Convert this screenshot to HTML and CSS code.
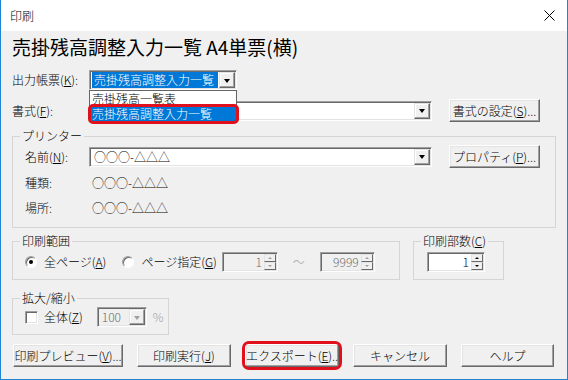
FILE: index.html
```html
<!DOCTYPE html>
<html lang="ja">
<head>
<meta charset="utf-8">
<title>印刷</title>
<link rel="stylesheet" href="styles.css">
</head>
<body>
<div class="window">
  <div class="titlebar">
    <span class="title">印刷</span>
    <span class="close"><svg width="11" height="11" viewBox="0 0 11 11"><path d="M0.5 0.5L10.5 10.5M10.5 0.5L0.5 10.5" stroke="#000" stroke-width="1" fill="none"/></svg></span>
  </div>
  <div class="content">
    <h1 class="heading">売掛残高調整入力一覧 A4単票(横)</h1>

    <div class="row row-report">
      <span class="label">出力帳票(<u>K</u>):</span>
      <div class="combo combo-report">
        <span class="combo-text selected">売掛残高調整入力一覧</span>
        <span class="drop-btn"><i class="tri"></i></span>
        <ul class="dropdown">
          <li class="item">売掛残高一覧表</li>
          <li class="item item-active">売掛残高調整入力一覧</li>
        </ul>
      </div>
    </div>

    <div class="row row-format">
      <span class="label">書式(<u>F</u>):</span>
      <div class="combo combo-wide">
        <span class="combo-text"></span>
        <span class="drop-btn"><i class="tri"></i></span>
      </div>
      <button class="btn btn-side">書式の設定(<u>S</u>)...</button>
    </div>

    <fieldset class="group group-printer">
      <legend>プリンター</legend>
      <div class="group-inner printer-inner">
        <div class="prow prow-name">
          <span class="plabel">名前(<u>N</u>):</span>
          <div class="combo combo-wide">
            <span class="combo-text">○○○-△△△</span>
            <span class="drop-btn"><i class="tri"></i></span>
          </div>
          <button class="btn btn-side">プロパティ(<u>P</u>)...</button>
        </div>
        <div class="prow prow-info">
          <span class="plabel">種類:</span>
          <span class="pvalue">○○○-△△△</span>
        </div>
        <div class="prow prow-info">
          <span class="plabel">場所:</span>
          <span class="pvalue">○○○-△△△</span>
        </div>
      </div>
    </fieldset>

    <div class="row row-range">
      <fieldset class="group group-range">
        <legend>印刷範囲</legend>
        <div class="group-inner range-inner">
          <span class="radio checked"></span>
          <span class="opt-text">全ページ(<u>A</u>)</span>
          <span class="radio radio-2"></span>
          <span class="opt-text">ページ指定(<u>G</u>)</span>
          <div class="spin spin-disabled spin-from">
            <span class="spin-val">1</span>
            <span class="spin-btns"><span class="sb"><i class="tri-up"></i></span><span class="sb"><i class="tri-down"></i></span></span>
          </div>
          <span class="tilde">～</span>
          <div class="spin spin-disabled spin-to">
            <span class="spin-val">9999</span>
            <span class="spin-btns"><span class="sb"><i class="tri-up"></i></span><span class="sb"><i class="tri-down"></i></span></span>
          </div>
        </div>
      </fieldset>
      <fieldset class="group group-copies">
        <legend>印刷部数(<u>C</u>)</legend>
        <div class="group-inner copies-inner">
          <div class="spin spin-copies">
            <span class="spin-val">1</span>
            <span class="spin-btns"><span class="sb"><i class="tri-up dark"></i></span><span class="sb"><i class="tri-down dark"></i></span></span>
          </div>
        </div>
      </fieldset>
    </div>

    <fieldset class="group group-zoom">
      <legend>拡大/縮小</legend>
      <div class="group-inner zoom-inner">
        <span class="checkbox"></span>
        <span class="opt-text">全体(<u>Z</u>)</span>
        <div class="combo combo-small disabled">
          <span class="combo-text">100</span>
          <span class="drop-btn"><i class="tri gray"></i></span>
        </div>
        <span class="percent">%</span>
      </div>
    </fieldset>

    <div class="buttons">
      <button class="btn btn-preview">印刷プレビュー(<u>V</u>)...</button>
      <button class="btn btn-std">印刷実行(<u>J</u>)</button>
      <button class="btn btn-std btn-export">エクスポート(<u>E</u>)...</button>
      <button class="btn btn-std">キャンセル</button>
      <button class="btn btn-std btn-help">ヘルプ</button>
    </div>
  </div>
</div>
</body>
</html>
```
FILE: styles.css
```css
* { box-sizing: border-box; margin: 0; padding: 0; }
html, body { margin: 0; background: #f0f0f0; }
body {
  font-family: "Noto Sans CJK JP", "Noto Sans", sans-serif;
  font-size: 12px;
  font-weight: 300;
  color: #000;
}
u { text-decoration: underline; text-underline-offset: 1px; }

.window {
  width: 568px;
  height: 380px;
  border: 1px solid #1f84d4;
  border-top: none;
  background: #f0f0f0;
  display: flex;
  flex-direction: column;
}

.titlebar {
  height: 31px;
  background: #fff;
  display: flex;
  align-items: center;
  justify-content: space-between;
  padding: 0 12px 0 9px;
}
.title { font-size: 12px; line-height: 16px; }
.close { display: flex; width: 11px; height: 11px; }

.content {
  flex: 1;
  padding: 4px 11px 0 11px;
  display: flex;
  flex-direction: column;
}

.heading {
  font-size: 19px;
  font-weight: 400;
  line-height: 24px;
  height: 24px;
  white-space: nowrap;
}

.row { display: flex; align-items: center; }
.row-report { margin-top: 11px; height: 20px; position: relative; z-index: 2; }
.row-format { margin-top: 9px; height: 23px; }
.label { width: 77px; line-height: 16px; white-space: nowrap; }

/* combo boxes */
.combo {
  position: relative;
  height: 20px;
  display: flex;
  padding: 1px;
  background: #fff;
  border: 1px solid;
  border-color: #a0a0a0 #fff #fff #a0a0a0;
  box-shadow: inset 1px 1px 0 #696969, inset -1px -1px 0 #e3e3e3;
}
.combo-report { width: 148px; }
.combo-wide { width: 343px; }
.combo-small { width: 50px; }
.combo-text {
  flex: 1;
  line-height: 16px;
  padding-left: 2px;
  margin-left: 1px;
  white-space: nowrap;
  overflow: hidden;
}
.combo-text.selected { background: #0078d7; color: #fff; margin-right: 1px; }
.drop-btn {
  width: 16px;
  height: 16px;
  display: flex;
  align-items: center;
  justify-content: center;
  background: #f0f0f0;
  border: 1px solid;
  border-color: #e3e3e3 #696969 #696969 #e3e3e3;
  box-shadow: inset -1px -1px 0 #a0a0a0, inset 1px 1px 0 #fff;
}
.tri {
  width: 0; height: 0;
  border-left: 3.5px solid transparent;
  border-right: 3.5px solid transparent;
  border-top: 4px solid #000;
  margin-top: 1px;
}
.tri.gray { border-top-color: #a0a0a0; }
.combo.disabled { background: #f0f0f0; color: #6d6d6d; }

/* dropdown list (overlay) */
.dropdown {
  position: absolute;
  top: 19px;
  left: -1px;
  width: 148px;
  list-style: none;
  background: #fff;
  border: 1px solid #646464;
  z-index: 5;
}
.item { line-height: 15px; height: 15px; padding-left: 2px; white-space: nowrap; position: relative; overflow: hidden; }
.item-active { background: #0078d7; color: #fff; overflow: visible; }
.item-active::after {
  content: "";
  position: absolute;
  top: -2px; left: -2px; right: -3px; bottom: -3px;
  border: 3px solid #e0101c;
  border-radius: 5px;
}

/* buttons */
.btn {
  height: 23px;
  font-family: inherit;
  font-size: 12px;
  font-weight: 300;
  color: #000;
  background: #f0f0f0;
  border: 1px solid;
  border-color: #fff #696969 #696969 #fff;
  box-shadow: inset -1px -1px 0 #a0a0a0, inset 1px 1px 0 #e3e3e3;
  white-space: nowrap;
  padding: 0;
  line-height: 16px;
  position: relative;
}
.btn-side { width: 91px; margin-left: 17px; }

/* group boxes */
.group {
  border: 1px solid #d5d5d5;
  padding: 0;
  min-width: 0;
}
.group legend {
  margin-left: 7px;
  padding: 0 2px;
  line-height: 16px;
  white-space: nowrap;
}
.group-printer { margin-top: 6px; }
.printer-inner { padding: 1px 0 9px 12px; }
.prow { display: flex; align-items: center; }
.prow-name { height: 23px; }
.prow-info { height: 20px; margin-top: 5px; }
.plabel { width: 64px; white-space: nowrap; line-height: 16px; }
.pvalue { padding-left: 3px; line-height: 16px; }

.row-range { margin-top: 5px; align-items: stretch; }
.group-range { width: 388px; }
.group-copies { width: 91px; margin-left: 13px; }
.range-inner { display: flex; align-items: center; height: 20px; margin: 3px 0 7px 12px; }
.copies-inner { display: flex; align-items: center; height: 20px; margin: 3px 0 7px 13px; }

.radio {
  width: 12px; height: 12px;
  border-radius: 50%;
  border: 1px solid;
  border-color: #a0a0a0 #fff #fff #a0a0a0;
  background: #fff;
  box-shadow: inset 1px 1px 0 #696969;
  position: relative;
  flex: none;
}
.radio.checked::after {
  content: "";
  position: absolute;
  left: 3px; top: 3px;
  width: 4px; height: 4px;
  border-radius: 50%;
  background: #000;
}
.radio-2 { margin-left: 16px; }
.opt-text { margin-left: 7px; line-height: 16px; white-space: nowrap; }

.spin {
  height: 20px;
  display: flex;
  padding: 1px;
  border: 1px solid;
  border-color: #a0a0a0 #fff #fff #a0a0a0;
  box-shadow: inset 1px 1px 0 #696969, inset -1px -1px 0 #e3e3e3;
  background: #fff;
}
.spin-disabled { background: #f0f0f0; color: #6d6d6d; }
.spin-from { width: 56px; margin-left: 5px; }
.spin-to { width: 55px; }
.spin-copies { width: 58px; }
.spin-val { flex: 1; text-align: right; line-height: 16px; padding-right: 2px; margin-left: 1px; }
.spin-btns { width: 12px; display: flex; flex-direction: column; }
.sb {
  height: 8px;
  display: flex;
  align-items: center;
  justify-content: center;
  background: #f0f0f0;
  border: 1px solid;
  border-color: #e3e3e3 #696969 #696969 #e3e3e3;
}
.tri-up, .tri-down {
  width: 0; height: 0;
  border-left: 2px solid transparent;
  border-right: 2px solid transparent;
}
.tri-up { border-bottom: 2px solid #a0a0a0; }
.tri-down { border-top: 2px solid #a0a0a0; }
.tri-up.dark { border-bottom-color: #000; }
.tri-down.dark { border-top-color: #000; }
.tilde { color: #a0a0a0; width: 42px; text-align: center; line-height: 16px; }

.group-zoom { width: 157px; margin-top: 10px; }
.zoom-inner { display: flex; align-items: center; height: 20px; margin: 1px 0 7px 12px; }
.checkbox {
  width: 13px; height: 13px;
  border: 1px solid;
  border-color: #a0a0a0 #fff #fff #a0a0a0;
  box-shadow: inset 1px 1px 0 #696969, inset -1px -1px 0 #e3e3e3;
  background: #fff;
  flex: none;
  margin-right: -1px;
}
.combo-small { margin-left: 14px; }
.percent { margin-left: 6px; color: #a0a0a0; line-height: 16px; }

.buttons {
  margin-top: 9px;
  padding-left: 1px;
  display: flex;
  gap: 14px;
}
.btn-preview { width: 110px; }
.btn-std { width: 94px; }
.btn-help { width: 93px; }
.btn-export::after {
  content: "";
  position: absolute;
  top: -4px; left: -4px; right: -4px; bottom: -4px;
  border: 3px solid #e0101c;
  border-radius: 7px;
}
```
